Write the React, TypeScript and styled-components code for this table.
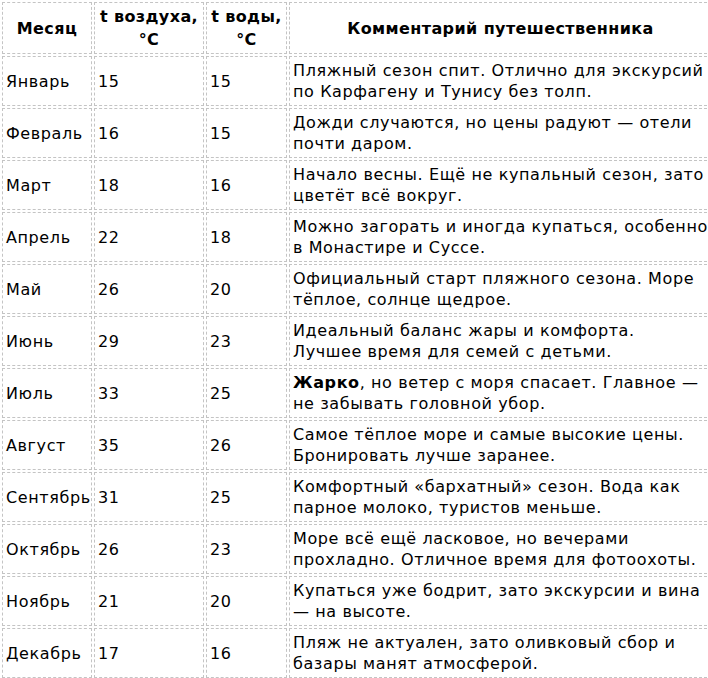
import styled, { createGlobalStyle } from 'styled-components'

const GlobalStyle = createGlobalStyle`
  html, body {
    margin: 0;
    padding: 0;
    background: #fff;
    overflow: hidden;
  }
  body {
    font-family: 'DejaVu Sans', Verdana, sans-serif;
    color: #000;
  }
`

const Table = styled.table`
  border-collapse: separate;
  border-spacing: 2px;
  table-layout: fixed;
  width: 714px;
  font-size: 16px;
`

const HeadCell = styled.th<{ $width: number }>`
  width: ${p => p.$width}px;
  height: 46px;
  padding: 2px 0;
  border: 1px dashed #c4c4c4;
  font-weight: bold;
  line-height: 23px;
  letter-spacing: 0.4px;
  text-align: center;
  vertical-align: middle;
`

const Cell = styled.td`
  height: 42px;
  padding: 3px;
  border: 1px dashed #c4c4c4;
  line-height: 21px;
  letter-spacing: 0.6px;
  text-align: left;
  vertical-align: middle;
`

type Row = {
  month: string
  air: number
  water: number
  comment: React.ReactNode
}

const rows: Row[] = [
  { month: 'Январь', air: 15, water: 15, comment: 'Пляжный сезон спит. Отлично для экскурсий по Карфагену и Тунису без толп.' },
  { month: 'Февраль', air: 16, water: 15, comment: 'Дожди случаются, но цены радуют — отели почти даром.' },
  { month: 'Март', air: 18, water: 16, comment: 'Начало весны. Ещё не купальный сезон, зато цветёт всё вокруг.' },
  { month: 'Апрель', air: 22, water: 18, comment: 'Можно загорать и иногда купаться, особенно в Монастире и Суссе.' },
  { month: 'Май', air: 26, water: 20, comment: 'Официальный старт пляжного сезона. Море тёплое, солнце щедрое.' },
  { month: 'Июнь', air: 29, water: 23, comment: 'Идеальный баланс жары и комфорта. Лучшее время для семей с детьми.' },
  {
    month: 'Июль',
    air: 33,
    water: 25,
    comment: (
      <>
        <b>Жарко</b>, но ветер с моря спасает. Главное — не забывать головной убор.
      </>
    ),
  },
  { month: 'Август', air: 35, water: 26, comment: 'Самое тёплое море и самые высокие цены. Бронировать лучше заранее.' },
  { month: 'Сентябрь', air: 31, water: 25, comment: 'Комфортный «бархатный» сезон. Вода как парное молоко, туристов меньше.' },
  { month: 'Октябрь', air: 26, water: 23, comment: 'Море всё ещё ласковое, но вечерами прохладно. Отличное время для фотоохоты.' },
  { month: 'Ноябрь', air: 21, water: 20, comment: 'Купаться уже бодрит, зато экскурсии и вина — на высоте.' },
  { month: 'Декабрь', air: 17, water: 16, comment: 'Пляж не актуален, зато оливковый сбор и базары манят атмосферой.' },
]

export default function App() {
  return (
    <>
      <GlobalStyle />
      <Table>
        <thead>
          <tr>
            <HeadCell $width={88}>Месяц</HeadCell>
            <HeadCell $width={108}>t воздуха, °C</HeadCell>
            <HeadCell $width={79}>t воды, °C</HeadCell>
            <HeadCell $width={421}>Комментарий путешественника</HeadCell>
          </tr>
        </thead>
        <tbody>
          {rows.map(row => (
            <tr key={row.month}>
              <Cell>{row.month}</Cell>
              <Cell>{row.air}</Cell>
              <Cell>{row.water}</Cell>
              <Cell>{row.comment}</Cell>
            </tr>
          ))}
        </tbody>
      </Table>
    </>
  )
}
